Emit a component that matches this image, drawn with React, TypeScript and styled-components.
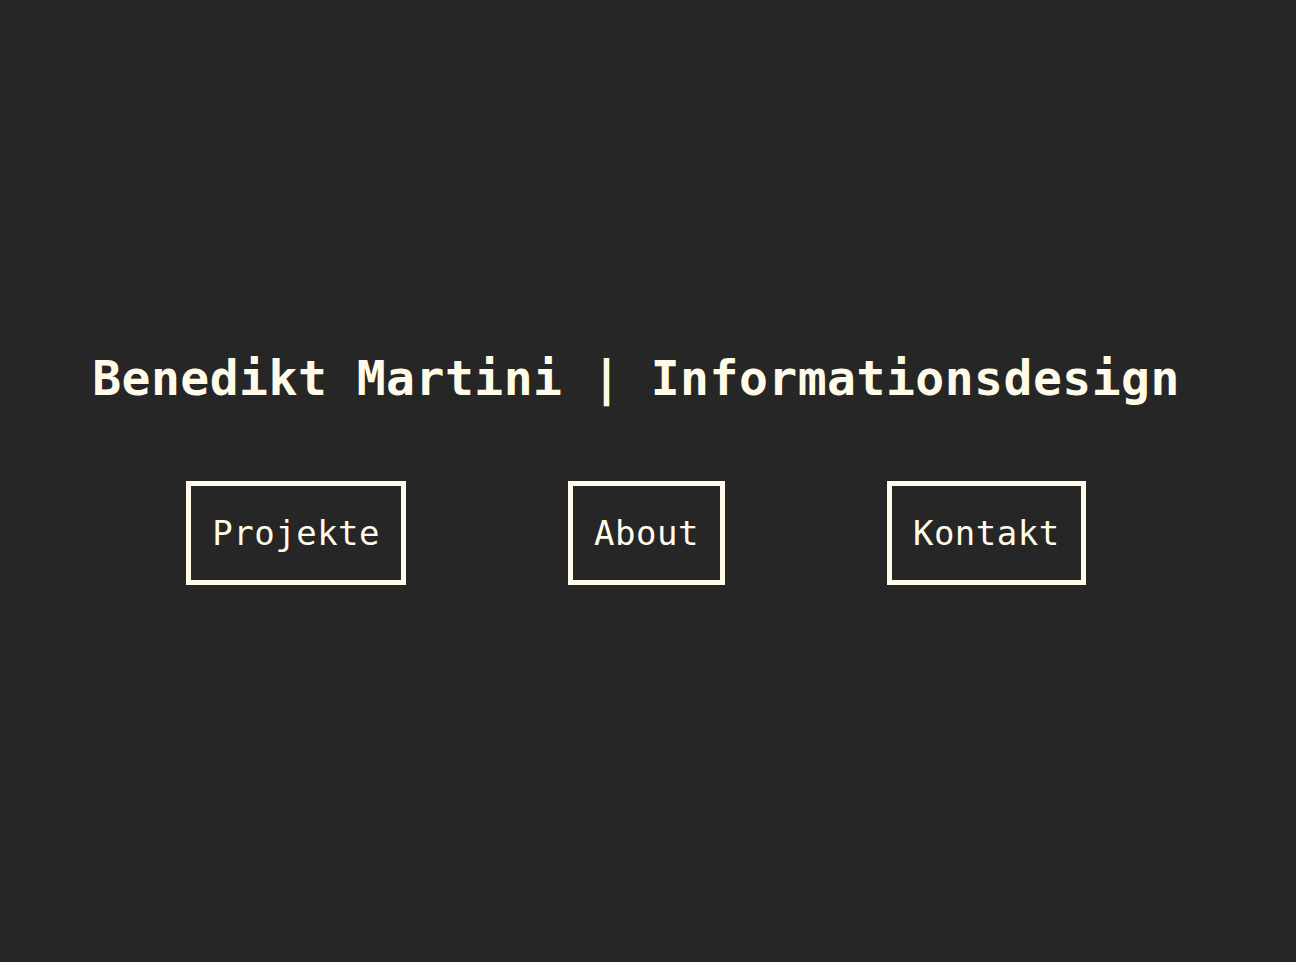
import React from "react";
import styled, { createGlobalStyle } from "styled-components";

const GlobalStyle = createGlobalStyle`
  html, body {
    margin: 0;
    padding: 0;
    background: #262626;
  }
  body {
    font-family: "DejaVu Sans Mono", "Liberation Mono", monospace;
    color: #fffbe8;
  }
`;

const Page = styled.main`
  box-sizing: border-box;
  min-height: 100vh;
  padding: 354px 24px 0 0;
  display: flex;
  flex-direction: column;
  align-items: center;
`;

const Title = styled.h1`
  margin: 0;
  font-size: 48px;
  line-height: 48px;
  font-weight: 700;
  letter-spacing: 0.5px;
  white-space: nowrap;
  color: #fffbe8;
`;

const Nav = styled.nav`
  margin-top: 79px;
  display: flex;
  gap: 162px;
`;

const NavButton = styled.a`
  box-sizing: border-box;
  display: block;
  border: 5px solid #fffbe8;
  padding: 30px 21px;
  font-size: 34px;
  line-height: 34px;
  letter-spacing: 0.5px;
  color: #fffbe8;
  text-decoration: none;
  white-space: nowrap;
`;

export default function App() {
  return (
    <>
      <GlobalStyle />
      <Page>
        <Title>Benedikt Martini | Informationsdesign</Title>
        <Nav>
          <NavButton href="#">Projekte</NavButton>
          <NavButton href="#">About</NavButton>
          <NavButton href="#">Kontakt</NavButton>
        </Nav>
      </Page>
    </>
  );
}
